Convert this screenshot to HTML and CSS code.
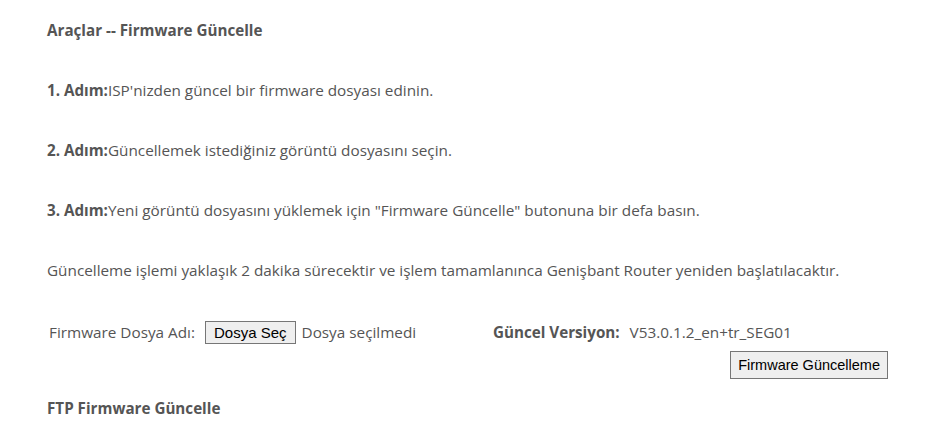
FILE: index.html
```html
<!DOCTYPE html>
<html lang="tr">
<head>
<meta charset="utf-8">
<link rel="stylesheet" href="styles.css">
</head>
<body>
<div class="page">
  <div class="title">Araçlar -- Firmware Güncelle</div>
  <p class="step"><b>1. Adım:</b>ISP'nizden güncel bir firmware dosyası edinin.</p>
  <p class="step"><b>2. Adım:</b>Güncellemek istediğiniz görüntü dosyasını seçin.</p>
  <p class="step"><b>3. Adım:</b>Yeni görüntü dosyasını yüklemek için "Firmware Güncelle" butonuna bir defa basın.</p>
  <p class="step">Güncelleme işlemi yaklaşık 2 dakika sürecektir ve işlem tamamlanınca Genişbant Router yeniden başlatılacaktır.</p>
  <div class="form">
    <div class="file-cell">
      <span class="label">Firmware Dosya Adı:</span>
      <span class="btn btn-file">Dosya Seç</span>
      <span class="nofile">Dosya seçilmedi</span>
    </div>
    <div class="ver-cell">
      <b>Güncel Versiyon:</b>
      <span class="ver">V53.0.1.2_en+tr_SEG01</span>
    </div>
  </div>
  <div class="actions">
    <span class="btn btn-update">Firmware Güncelleme</span>
  </div>
  <div class="title ftp">FTP Firmware Güncelle</div>
</div>
</body>
</html>
```

FILE: styles.css
```css
html, body {
  margin: 0;
  padding: 0;
  background: #ffffff;
}
body {
  font-family: "Open Sans", "Noto Sans", sans-serif;
  font-size: 15.3px;
  color: #555555;
}
b, .title {
  font-size: 15.2px;
  font-weight: bold;
}
.page {
  padding: 20px 0 0 47px;
  width: 841px;
}
.title {
  line-height: 20px;
  height: 20px;
}
.step {
  margin: 0;
  line-height: 20px;
  padding-top: 40px;
}
.form {
  display: flex;
  align-items: center;
  padding-top: 40px;
  height: 24px;
}
.file-cell {
  display: flex;
  align-items: center;
  width: 444px;
  padding-left: 2px;
}
.label {
  margin-right: 10px;
}
.btn {
  display: inline-block;
  font-family: "Liberation Sans", Arial, sans-serif;
  color: #000;
  background: #efefef;
  border: 1px solid #767676;
  box-sizing: border-box;
}
.btn-file {
  font-size: 15px;
  height: 23px;
  line-height: 21px;
  padding: 0 8px;
  margin-right: 6px;
}
.ver-cell b {
  margin-right: 6px;
}
.actions {
  display: flex;
  justify-content: flex-end;
  padding-top: 7px;
}
.btn-update {
  font-size: 14.5px;
  height: 28px;
  line-height: 26px;
  padding: 0 7px;
}
.ftp {
  margin-top: 19px;
}
```
